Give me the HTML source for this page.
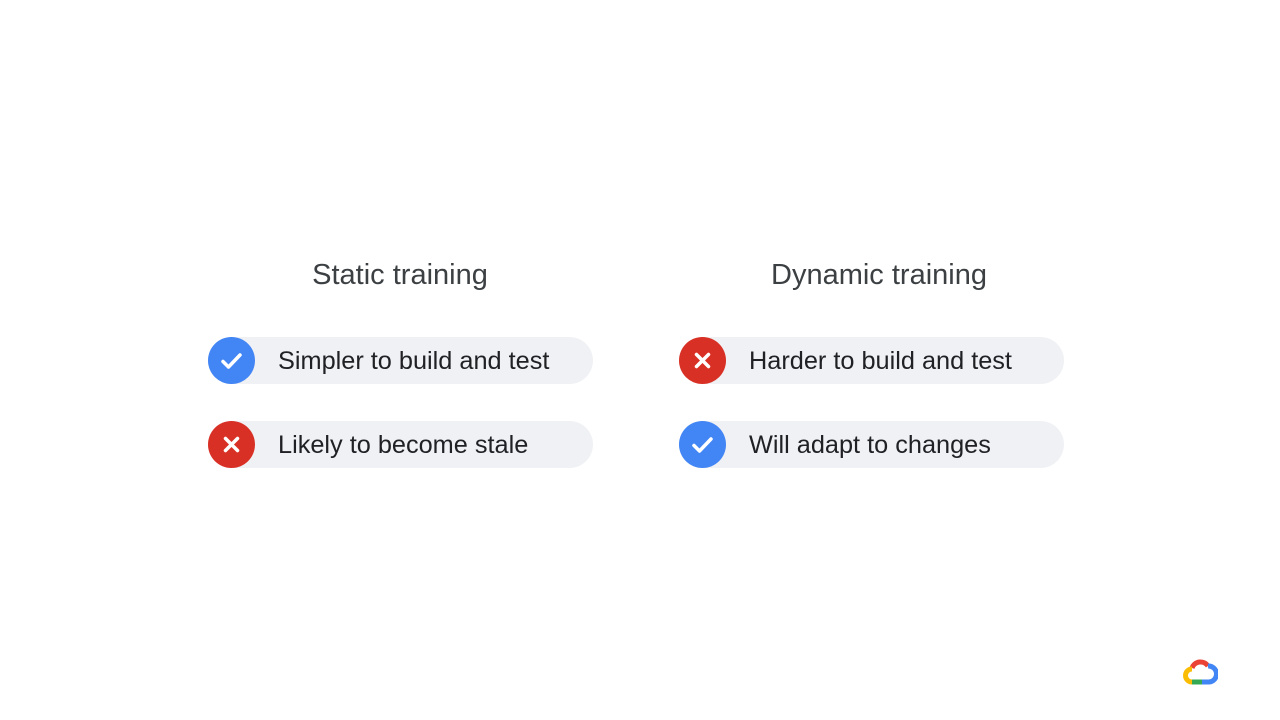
<!DOCTYPE html>
<html><head><style>
body{margin:0;width:1280px;height:720px;background:#fff;position:relative;font-family:"Liberation Sans",Arial,sans-serif;overflow:hidden}
.t{position:absolute;top:259px;font-size:29px;color:#3c4043;width:400px;text-align:center}
.p{position:absolute;width:385px;height:47px;border-radius:24px;background:#f0f1f4}
.c{position:absolute;left:0;top:0;width:47px;height:47px;border-radius:50%}
.b{background:#4285f4}.r{background:#d93025}
.c svg{position:absolute;left:0;top:0}
.x{position:absolute;left:70px;top:1px;line-height:47px;font-size:25.3px;color:#202124}
</style></head><body>
<div class="t" style="left:200px">Static training</div>
<div class="t" style="left:679px">Dynamic training</div>

<div class="p" style="left:208px;top:337px"><div class="c b"><svg width="47" height="47"><path d="M15 24.5l5.5 5.5 11.5-12" stroke="#fff" stroke-width="3.5" fill="none" stroke-linecap="round" stroke-linejoin="round"/></svg></div><div class="x">Simpler to build and test</div></div>
<div class="p" style="left:208px;top:421px"><div class="c r"><svg width="47" height="47"><path d="M17.5 17.5l12 12M29.5 17.5l-12 12" stroke="#fff" stroke-width="3.5" stroke-linecap="round"/></svg></div><div class="x">Likely to become stale</div></div>
<div class="p" style="left:679px;top:337px"><div class="c r"><svg width="47" height="47"><path d="M17.5 17.5l12 12M29.5 17.5l-12 12" stroke="#fff" stroke-width="3.5" stroke-linecap="round"/></svg></div><div class="x">Harder to build and test</div></div>
<div class="p" style="left:679px;top:421px"><div class="c b"><svg width="47" height="47"><path d="M15 24.5l5.5 5.5 11.5-12" stroke="#fff" stroke-width="3.5" fill="none" stroke-linecap="round" stroke-linejoin="round"/></svg></div><div class="x">Will adapt to changes</div></div>

<svg style="position:absolute;left:1182px;top:656px" width="36" height="30" viewBox="0 0 36 30">
<path d="M10 12 A9 9 0 0 1 26 10" stroke="#ea4335" stroke-width="5" fill="none"/>
<path d="M26 10 A8 8 0 0 1 27 26 H20" stroke="#4285f4" stroke-width="5" fill="none"/>
<path d="M20 26 H10" stroke="#34a853" stroke-width="5" fill="none"/>
<path d="M10 26 A6.5 6.5 0 0 1 10 13" stroke="#fbbc04" stroke-width="5" fill="none"/>
</svg>
</body></html>
